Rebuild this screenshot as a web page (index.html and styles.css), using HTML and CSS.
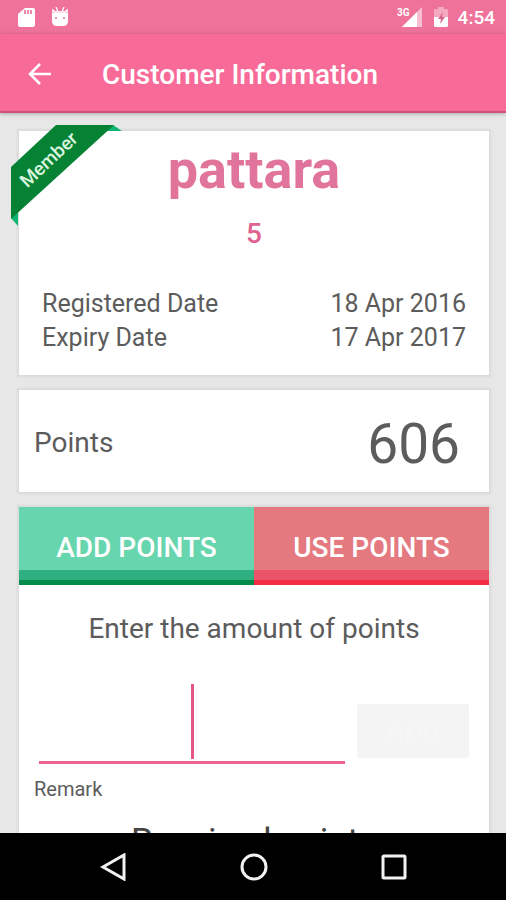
FILE: index.html
```html
<!DOCTYPE html>
<html lang="en">
<head>
<meta charset="utf-8">
<meta name="viewport" content="width=device-width, initial-scale=1">
<title>Customer Information</title>
<link rel="stylesheet" href="styles.css">
</head>
<body>
<div class="status">
  <svg class="status-sd" viewBox="0 0 17 21" aria-hidden="true"><path d="M7 1h8q2 0 2 2v15q0 2-2 2H2q-2 0-2-2V7z" fill="#fff"/><path d="M7 3v4M10 3v4M13 3v4" stroke="#e0668e" stroke-width="1.5"/></svg>
  <svg class="status-bot" viewBox="0 0 18 21" aria-hidden="true"><path d="M1 6h16v8q0 5-5 5H6q-5 0-5-5z" fill="#fff"/><path d="M2 7V3l3 3M16 7V3l-3 3M5 0l2 5M13 0l-2 5M4 5h10" stroke="#fff" stroke-width="1.3" fill="none"/><circle cx="5" cy="11" r="1" fill="#ee7299"/><circle cx="13" cy="11" r="1" fill="#ee7299"/></svg>
  <span class="network">3G</span>
  <svg class="status-signal" viewBox="0 0 20 20" aria-hidden="true"><path d="M0 20L20 0v20z" fill="#f7bdd0"/><path d="M0 20L15 5v15z" fill="#fff"/></svg>
  <svg class="status-battery" viewBox="0 0 14 20" aria-hidden="true"><path d="M4 0h6v2h3l1 1v7H0V3l1-1h3z" fill="#f4a9c1"/><path d="M0 10h14v9l-1 1H1l-1-1z" fill="#fff"/><path d="M9 5l-5 7h3l-1 5 5-7H8z" fill="#d9648a"/></svg>
  <time class="clock">4:54</time>
</div>
<header class="appbar">
  <button class="back" type="button" aria-label="Back"><svg viewBox="0 0 24 24"><path d="M23 11H2M12 1L2 11l10 10" fill="none" stroke="#fff" stroke-width="2.6"/></svg></button>
  <h1 class="title">Customer Information</h1>
</header>
<main class="content">
  <section class="card member">
    <div class="ribbon">
      <svg class="ribbon-shape" viewBox="0 0 112 102" aria-hidden="true"><path d="M102 0l9 6H94zM0 93l7 8V84z" fill="#0fb573"/><path d="M45 0h58L0 94V42z" fill="#058233"/></svg>
      <span class="ribbon-text">Member</span>
    </div>
    <h2 class="name">pattara</h2>
    <p class="code">5</p>
    <dl class="dates">
      <div class="date"><dt>Registered Date</dt><dd>18 Apr 2016</dd></div>
      <div class="date"><dt>Expiry Date</dt><dd>17 Apr 2017</dd></div>
    </dl>
  </section>
  <section class="card points">
    <span class="points-label">Points</span>
    <strong class="points-value">606</strong>
  </section>
  <section class="card entry">
    <div class="tabs">
      <button class="tab add" type="button">ADD POINTS</button>
      <button class="tab use" type="button">USE POINTS</button>
    </div>
    <form class="form">
      <label class="prompt" for="amount">Enter the amount of points</label>
      <div class="row">
        <div class="field"><input class="amount" id="amount" type="text" inputmode="numeric"><span class="caret"></span></div>
        <button class="submit" type="button" disabled>ADD</button>
      </div>
      <p class="remark">Remark</p>
      <p class="received">Received points</p>
    </form>
  </section>
</main>
<nav class="nav">
  <button type="button" aria-label="Back"><svg viewBox="0 0 28 28"><path d="M24 2v24L3 14z"/></svg></button>
  <button type="button" aria-label="Home"><svg viewBox="0 0 28 28"><circle cx="14" cy="14" r="12"/></svg></button>
  <button type="button" aria-label="Recent apps"><svg viewBox="0 0 28 28"><rect x="3" y="3" width="22" height="22" rx="1"/></svg></button>
</nav>
</body>
</html>
```
FILE: styles.css
```css
* { box-sizing: border-box; }
body {
  margin: 0;
  height: 100vh;
  display: flex;
  flex-direction: column;
  overflow: hidden;
  background: #e7e7e7;
  color: #5c5c5c;
  font-family: Roboto, "Liberation Sans", sans-serif;
}
h1, h2, p, dl, dd { margin: 0; }
button { border: 0; padding: 0; font-family: inherit; }
svg { display: block; }

.status {
  flex: none;
  display: flex;
  align-items: center;
  height: 34px;
  padding: 0 11px 0 18px;
  background: #ee7299;
  color: #fff;
}
.status-sd { width: 17px; height: 21px; margin-right: 16px; }
.status-bot { width: 18px; height: 21px; }
.network { margin-left: auto; align-self: flex-start; padding-top: 7px; font-size: 10px; line-height: 12px; font-weight: 700; }
.status-signal { width: 20px; height: 20px; margin: 0 12px 0 -8px; }
.status-battery { width: 14px; height: 20px; margin-right: 10px; }
.clock { font-size: 19px; font-weight: 500; }

.appbar {
  flex: none;
  position: relative;
  display: flex;
  align-items: center;
  height: 79px;
  padding: 4px 0 0 28px;
  background: #f86a98;
  border-bottom: 2px solid #d0527c;
  box-shadow: 0 1px 4px #0004;
  color: #fff;
}
.back { width: 24px; height: 24px; margin-right: 50px; background: none; }
.title { font-size: 28px; font-weight: 500; }

.content {
  flex: 1;
  min-height: 0;
  overflow: hidden;
  display: flex;
  flex-direction: column;
  gap: 15px;
  padding: 18px 17px 0 19px;
}
.card { flex: none; background: #fff; box-shadow: 0 0 2px 2px #dadada; }

.member { position: relative; padding: 9px 23px 20px; }
.ribbon { position: absolute; left: -8px; top: -6px; width: 112px; height: 102px; }
.ribbon-text {
  position: absolute;
  left: 0;
  top: 23px;
  width: 76px;
  text-align: center;
  font-size: 19px;
  line-height: 24px;
  font-weight: 500;
  color: #d9f5df;
  transform: rotate(-43deg);
}
.name { font-size: 54px; line-height: 60px; font-weight: 700; text-align: center; color: #e0749b; }
.code { margin-top: 17px; font-size: 28px; line-height: 34px; font-weight: 500; text-align: center; color: #e0638f; }
.dates { margin-top: 36px; font-size: 25px; line-height: 34px; }
.date { display: flex; justify-content: space-between; }

.points { display: flex; align-items: center; justify-content: space-between; height: 102px; padding: 2px 29px 0 15px; }
.points-label { font-size: 28px; }
.points-value { font-size: 55px; line-height: 64px; padding-top: 4px; font-weight: 400; }

.tabs { display: grid; grid-template-columns: 1fr 1fr; }
.tab { height: 78px; padding-top: 2px; font-size: 28px; font-weight: 500; color: #fff; }
.add { background: linear-gradient(#67d5ae 63px, #30b080 63px 73px, #058c4c 73px); }
.use { background: linear-gradient(#e47a80 63px, #ea5368 63px 73px, #f42c46 73px); }

.form { padding: 24px 15px 0; }
.prompt { display: block; font-size: 28px; line-height: 40px; text-align: center; }
.row { display: flex; align-items: flex-end; gap: 12px; padding: 27px 5px 0; }
.field { position: relative; flex: 1; min-width: 0; }
.amount {
  display: block;
  width: 100%;
  height: 88px;
  border: 0;
  border-bottom: 3px solid #ea6491;
  outline: 0;
  background: none;
  font: 400 55px Roboto, sans-serif;
  text-align: center;
}
.caret { position: absolute; left: calc(50% - 1px); top: 8px; width: 3px; height: 75px; background: #e55688; }
.submit { width: 112px; height: 54px; margin-bottom: 6px; border-radius: 2px; background: #f4f4f4; color: #f6f6f6; font-size: 28px; font-weight: 500; }
.remark { margin-top: 12px; font-size: 20px; line-height: 26px; }
.received { margin-top: 20px; font-size: 35px; line-height: 40px; text-align: center; color: #444; }

.nav { flex: none; display: flex; justify-content: center; align-items: center; gap: 112px; height: 67px; padding-left: 1px; background: #000; }
.nav button { width: 28px; height: 28px; background: none; }
.nav svg { fill: none; stroke: #f2f2f2; stroke-width: 3; }
```
